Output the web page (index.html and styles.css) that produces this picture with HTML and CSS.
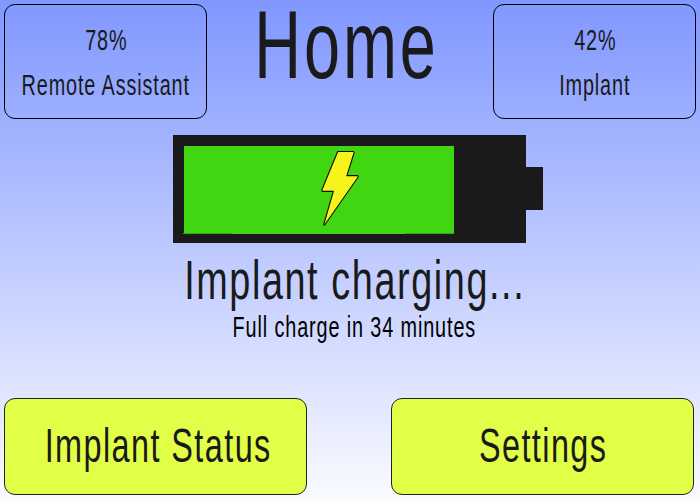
FILE: index.html
```html
<!DOCTYPE html>
<html lang="en">
<head>
<meta charset="utf-8">
<title>Home</title>
<link rel="stylesheet" href="styles.css">
</head>
<body>
<div class="screen">
  <header class="top">
    <section class="level remote"><p><span class="t">78%</span></p><p><span class="t">Remote Assistant</span></p></section>
    <h1><span class="t">Home</span></h1>
    <section class="level implant"><p><span class="t">42%</span></p><p><span class="t">Implant</span></p></section>
  </header>
  <main>
    <svg class="battery" width="370" height="108" viewBox="173 135 370 108" aria-hidden="true">
      <path d="M173 135H526V167H543V210H526V243H173Z" fill="#1a1a1a"/>
      <path d="M184 146H454V234H184Z" fill="#40d612"/>
      <path d="M183 233H232V234H183Z" fill="#36ad14"/>
      <path d="M405 233H454V234H405Z" fill="#36a414"/>
      <path d="M337.7 151.5H353.5L354.2 152.5L346.9 175.6H357.8L358.2 177L324.5 225.2L323.7 224.5L333.3 191.4H322.2L321.8 190Z" fill="#f7f31d" stroke="#101008" stroke-width="1.1" stroke-linejoin="round"/>
    </svg>
    <p class="state"><span class="t">Implant charging...</span></p>
    <p class="eta"><span class="t">Full charge in 34 minutes</span></p>
  </main>
  <nav>
    <button class="status"><span class="t">Implant Status</span></button>
    <button class="settings"><span class="t">Settings</span></button>
  </nav>
</div>
</body>
</html>
```
FILE: styles.css
```css
* { box-sizing: border-box; margin: 0; padding: 0; }

body { font-family: "Liberation Sans", Arial, sans-serif; color: #1a1a1a; }

.screen {
  width: 700px;
  height: 500px;
  display: flex;
  flex-direction: column;
  background: linear-gradient(#8097ff, #fafbff);
}

/* condensed lettering */
.t {
  display: inline-block;
  white-space: nowrap;
  letter-spacing: .044em;
  margin-right: -.044em;
  transform: scaleX(.675);
}

.top {
  height: 135px;
  display: grid;
  grid-template-columns: 203px 1fr 203px;
  align-items: start;
  padding: 0 4px;
}

.level {
  height: 115px;
  margin-top: 4px;
  padding-top: 12px;
  border: 1px solid #000;
  border-radius: 11px;
  font-size: 29.4px;
  line-height: 45px;
}

.level p, h1, .state, .eta, button {
  display: flex;
  justify-content: center;
}

h1 {
  font-size: 96px;
  font-weight: 400;
  line-height: 90px;
  margin-left: -11px;
}

main {
  height: 263px;
  display: flex;
  flex-direction: column;
  align-items: center;
}

.battery { display: block; margin-left: 16px; }

.state { font-size: 56px; line-height: 60px; margin: 7px 0 0 8px; }
.state .t { letter-spacing: .042em; margin-right: -.042em; }

.eta { font-size: 29.4px; line-height: 33px; margin-left: 7px; color: #000; }

nav {
  display: flex;
  justify-content: space-between;
  padding: 0 6px 0 4px;
}

button {
  width: 303px;
  height: 97px;
  align-items: center;
  padding-bottom: 2px;
  border: 1px solid #222;
  border-radius: 11px;
  background: #e2ff47;
  color: inherit;
  font: 48px "Liberation Sans", Arial, sans-serif;
}

.status { padding-left: 3px; }
.settings { padding-left: 0; }
```
